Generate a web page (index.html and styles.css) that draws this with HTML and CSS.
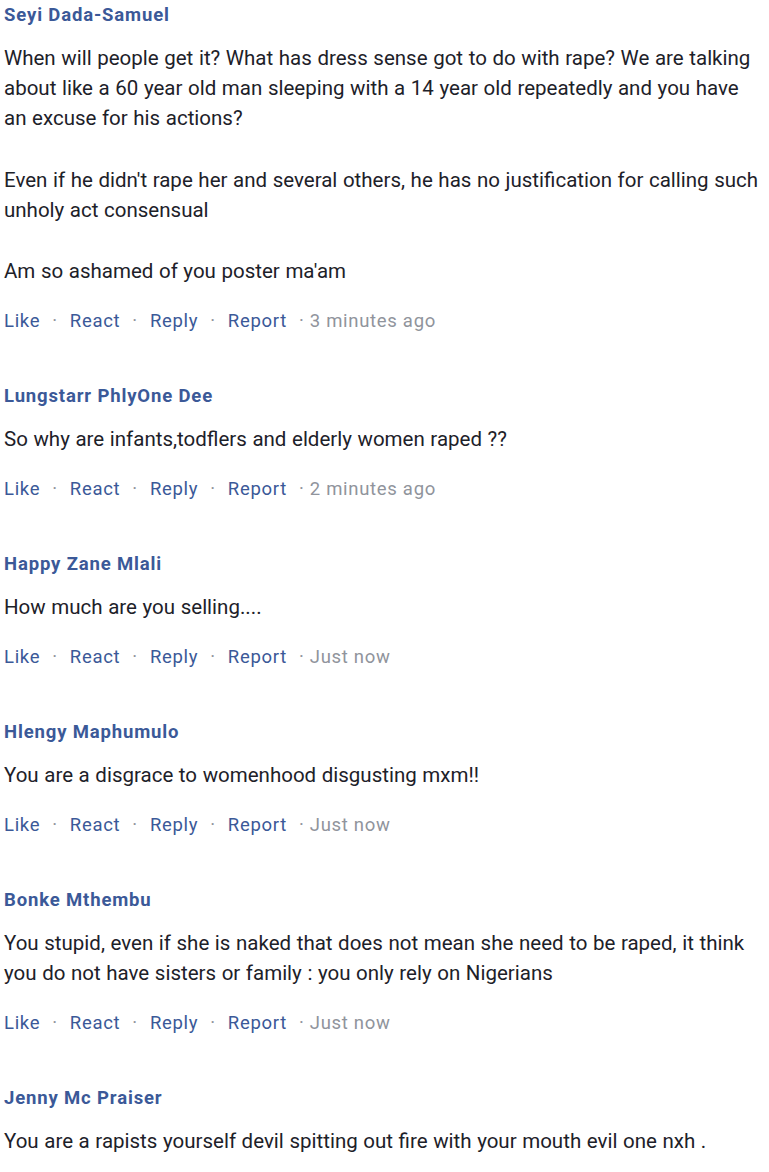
FILE: index.html
```html
<!DOCTYPE html>
<html>
<head>
<meta charset="utf-8">
<link rel="stylesheet" href="styles.css">
</head>
<body>
<div class="list">
  <div class="comment">
    <div class="name">Seyi Dada-Samuel</div>
    <div class="text">
      <p>When will people get it? What has dress sense got to do with rape? We are talking about like a 60 year old man sleeping with a 14 year old repeatedly and you have an excuse for his actions?</p>
      <p>Even if he didn't rape her and several others, he has no justification for calling such unholy act consensual</p>
      <p>Am so ashamed of you poster ma'am</p>
    </div>
    <div class="actions"><span class="a">Like</span><span class="dot">·</span><span class="a">React</span><span class="dot">·</span><span class="a">Reply</span><span class="dot">·</span><span class="a">Report</span><span class="time">· 3 minutes ago</span></div>
  </div>
  <div class="comment">
    <div class="name">Lungstarr PhlyOne Dee</div>
    <div class="text"><p>So why are infants,todflers and elderly women raped ??</p></div>
    <div class="actions"><span class="a">Like</span><span class="dot">·</span><span class="a">React</span><span class="dot">·</span><span class="a">Reply</span><span class="dot">·</span><span class="a">Report</span><span class="time">· 2 minutes ago</span></div>
  </div>
  <div class="comment">
    <div class="name">Happy Zane Mlali</div>
    <div class="text"><p>How much are you selling....</p></div>
    <div class="actions"><span class="a">Like</span><span class="dot">·</span><span class="a">React</span><span class="dot">·</span><span class="a">Reply</span><span class="dot">·</span><span class="a">Report</span><span class="time">· Just now</span></div>
  </div>
  <div class="comment">
    <div class="name">Hlengy Maphumulo</div>
    <div class="text"><p>You are a disgrace to womenhood disgusting mxm!!</p></div>
    <div class="actions"><span class="a">Like</span><span class="dot">·</span><span class="a">React</span><span class="dot">·</span><span class="a">Reply</span><span class="dot">·</span><span class="a">Report</span><span class="time">· Just now</span></div>
  </div>
  <div class="comment">
    <div class="name">Bonke Mthembu</div>
    <div class="text"><p>You stupid, even if she is naked that does not mean she need to be raped, it think you do not have sisters or family : you only rely on Nigerians</p></div>
    <div class="actions"><span class="a">Like</span><span class="dot">·</span><span class="a">React</span><span class="dot">·</span><span class="a">Reply</span><span class="dot">·</span><span class="a">Report</span><span class="time">· Just now</span></div>
  </div>
  <div class="comment">
    <div class="name">Jenny Mc Praiser</div>
    <div class="text"><p>You are a rapists yourself devil spitting out fire with your mouth evil one nxh .</p></div>
  </div>
</div>
</body>
</html>
```
FILE: styles.css
```css
html, body {
  margin: 0;
  padding: 0;
  background: #ffffff;
}
body {
  font-family: Roboto, "Noto Sans", "Liberation Sans", sans-serif;
  color: #1d2129;
  width: 769px;
}
.list {
  padding: 0 4px;
  display: flex;
  flex-direction: column;
  gap: 45px;
}
.comment {
  display: flex;
  flex-direction: column;
}
.name {
  font-size: 18.5px;
  font-weight: 700;
  letter-spacing: 0.85px;
  line-height: 30px;
  color: #3b5998;
}
.text {
  margin-top: 13px;
  font-size: 20.5px;
  word-spacing: 0.5px;
  line-height: 30px;
  display: flex;
  flex-direction: column;
  gap: 31.5px;
}
.text p {
  margin: 0;
}
.actions {
  margin-top: 20px;
  font-size: 18.5px;
  letter-spacing: 0.7px;
  line-height: 30px;
  display: flex;
  align-items: baseline;
}
.actions .a {
  color: #3b5998;
}
.dot {
  color: #90949c;
  padding: 0 12px;
}
.time {
  color: #90949c;
  padding-left: 12px;
}
```
